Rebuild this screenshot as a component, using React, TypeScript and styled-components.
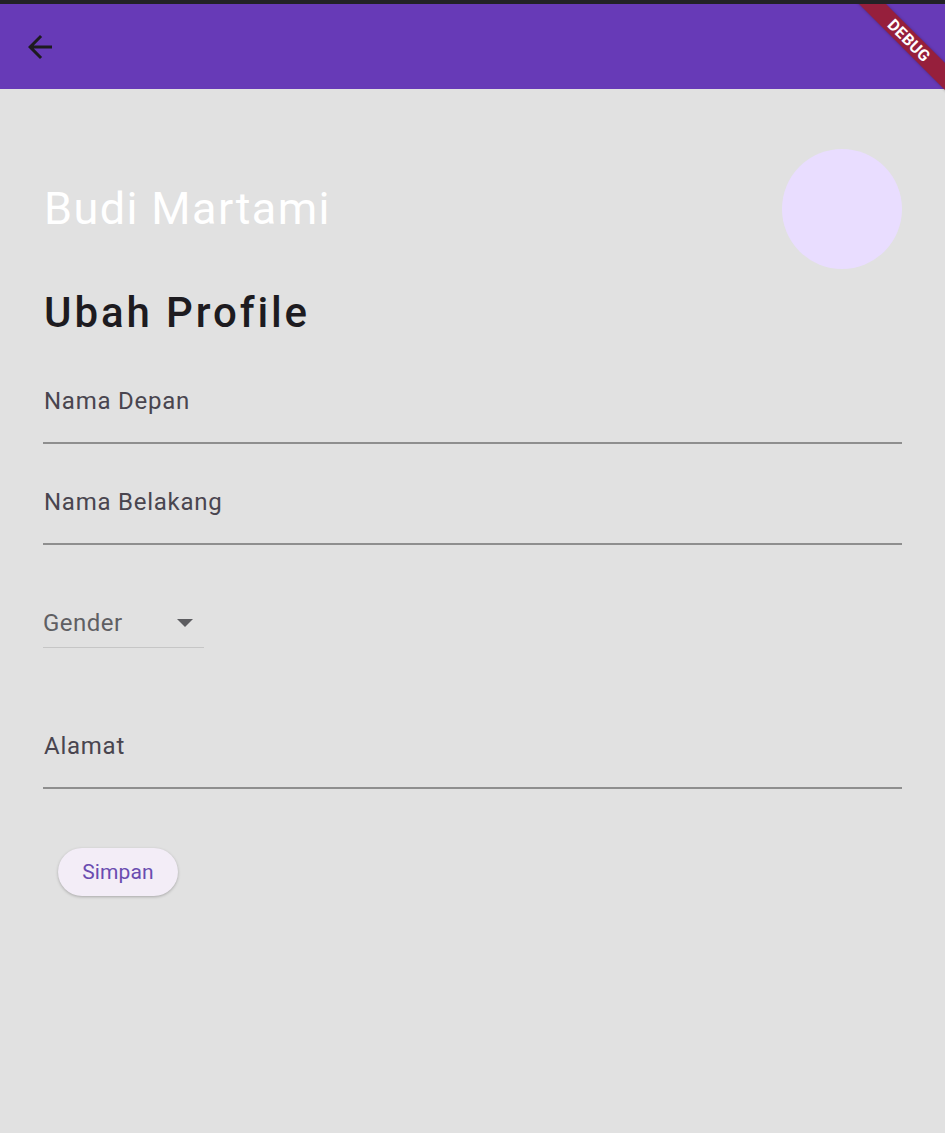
import styled, { createGlobalStyle } from "styled-components";

const GlobalStyle = createGlobalStyle`
  html, body {
    margin: 0;
    padding: 0;
    background: #e1e1e1;
  }
  body {
    font-family: Roboto, "Noto Sans", sans-serif;
  }
`;

const App = () => {
  return (
    <Screen>
      <GlobalStyle />
      <WindowEdge />
      <AppBar>
        <BackButton aria-label="back">
          <svg width="36" height="36" viewBox="0 0 24 24">
            <path
              d="M20 11H7.83l5.59-5.59L12 4l-8 8 8 8 1.41-1.41L7.83 13H20v-2z"
              fill="#1d1b20"
            />
          </svg>
        </BackButton>
      </AppBar>

      <Body>
        <Header>
          <Name>Budi Martami</Name>
          <Avatar />
        </Header>

        <Title>Ubah Profile</Title>

        <Field>
          <Label>Nama Depan</Label>
        </Field>
        <Field $gap={44}>
          <Label>Nama Belakang</Label>
        </Field>

        <Dropdown>
          <Hint>Gender</Hint>
          <Caret />
        </Dropdown>

        <Field $gap={84}>
          <Label>Alamat</Label>
        </Field>

        <SaveButton>Simpan</SaveButton>
      </Body>

      <BannerClip>
        <Banner>DEBUG</Banner>
      </BannerClip>
    </Screen>
  );
};

export default App;

/** Styled components */

const Screen = styled.div`
  position: relative;
  min-height: 1133px;
  background: #e1e1e1;
  overflow: hidden;
`;

const WindowEdge = styled.div`
  height: 4px;
  background: #222226;
`;

const AppBar = styled.header`
  height: 85px;
  background: #673ab7;
  display: flex;
  align-items: center;
  padding-left: 22px;
`;

const BackButton = styled.button`
  display: flex;
  padding: 0;
  border: 0;
  background: none;
  cursor: pointer;
`;

const Body = styled.main`
  display: flex;
  flex-direction: column;
  padding: 0 43px;
`;

const Header = styled.div`
  display: flex;
  align-items: center;
  justify-content: space-between;
  margin-top: 60px;
  padding-left: 1px;
`;

const Name = styled.h1`
  margin: 0;
  font-size: 45px;
  font-weight: 400;
  line-height: 52px;
  color: #ffffff;
  letter-spacing: 1.4px;
`;

const Avatar = styled.div`
  width: 120px;
  height: 120px;
  border-radius: 50%;
  background: #e9ddff;
`;

const Title = styled.h2`
  margin: 19px 0 0 1px;
  font-size: 42px;
  font-weight: 500;
  line-height: 50px;
  color: #1d1b20;
  letter-spacing: 2.9px;
`;

const Field = styled.div<{ $gap?: number }>`
  margin-top: ${({ $gap }) => $gap ?? 49}px;
  padding-bottom: 27px;
  border-bottom: 2px solid #8e8e8e;
`;

const Label = styled.div`
  padding-left: 1px;
  font-size: 24px;
  line-height: 28px;
  color: #49454f;
  letter-spacing: 0.75px;
`;

const Dropdown = styled.div`
  margin-top: 64px;
  width: 161px;
  display: flex;
  align-items: center;
  justify-content: space-between;
  padding-bottom: 10px;
  border-bottom: 1.5px solid #c6c6c6;
`;

const Hint = styled.span`
  font-size: 24px;
  line-height: 28px;
  color: #5f5f63;
  letter-spacing: 0.5px;
`;

const Caret = styled.span`
  width: 0;
  height: 0;
  margin-right: 11px;
  border-left: 8px solid transparent;
  border-right: 8px solid transparent;
  border-top: 8px solid #5c5c60;
`;

const SaveButton = styled.button`
  align-self: flex-start;
  margin: 59px 0 0 15px;
  width: 120px;
  height: 48px;
  border: 0;
  border-radius: 24px;
  background: #f3edf7;
  color: #6a4cb0;
  font-family: Roboto, sans-serif;
  font-size: 21px;
  letter-spacing: 0.15px;
  box-shadow: 0 1px 3px rgba(0, 0, 0, 0.25);
  cursor: pointer;
`;

const BannerClip = styled.div`
  position: absolute;
  top: 4px;
  right: 0;
  width: 120px;
  height: 120px;
  overflow: hidden;
  pointer-events: none;
`;

const Banner = styled.div`
  position: absolute;
  left: -16px;
  top: 27px;
  width: 200px;
  height: 19px;
  transform: rotate(45deg);
  background: #961f3c;
  color: #ffffff;
  font-family: Roboto, sans-serif;
  font-weight: 700;
  font-size: 16px;
  line-height: 19px;
  text-align: center;
  letter-spacing: 0.3px;
  box-shadow: 0 0 3px rgba(0, 0, 0, 0.3);
`;
